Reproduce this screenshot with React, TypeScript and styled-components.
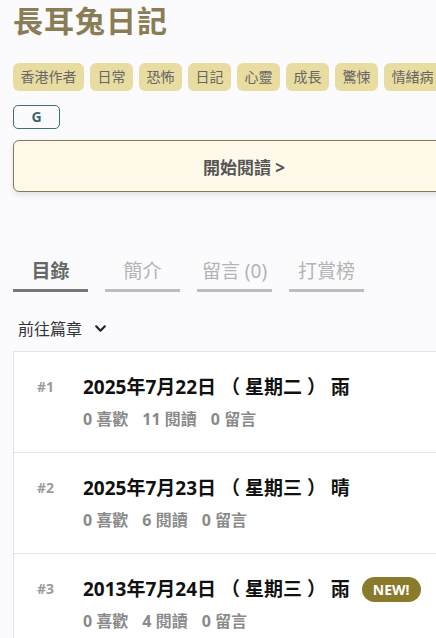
import styled, { createGlobalStyle } from "styled-components";

const GlobalStyle = createGlobalStyle`
  html, body {
    margin: 0;
    padding: 0;
    background: #fbfbfd;
    overflow: hidden;
  }
  body {
    font-family: "Noto Sans", "Noto Sans CJK TC", sans-serif;
  }
`;

const Page = styled.div`
  width: 462px;
  padding: 0 0 0 13px;
`;

const Title = styled.h1`
  margin: 0;
  padding-top: 1px;
  font-size: 30px;
  line-height: 40px;
  font-weight: 700;
  color: #8a7d55;
  letter-spacing: 1px;
`;

const Tags = styled.div`
  display: flex;
  gap: 6px;
  margin-top: 22px;
  white-space: nowrap;
`;

const Tag = styled.span`
  flex: none;
  background: #e9dca1;
  color: #666;
  font-size: 14px;
  line-height: 28px;
  height: 28px;
  padding: 0 7.5px;
  border-radius: 6px;
`;

const GButton = styled.div`
  margin-top: 14px;
  width: 45px;
  height: 22px;
  border: 1px solid #3d6f7b;
  border-radius: 5px;
  color: #3d6470;
  font-weight: 700;
  font-size: 14px;
  line-height: 22px;
  text-align: center;
`;

const ReadButton = styled.div`
  margin-top: 11px;
  height: 50px;
  border: 1px solid #85795a;
  border-radius: 6px;
  background: #fff9ea;
  box-shadow: 0 3px 6px rgba(0, 0, 0, 0.1);
  display: flex;
  align-items: center;
  justify-content: center;
  color: #555;
  font-weight: 700;
  font-size: 17px;
`;

const TabBar = styled.div`
  display: flex;
  gap: 17px;
  margin-top: 59px;
`;

const Tab = styled.div<{ $active?: boolean }>`
  width: 75px;
  height: 38px;
  border-bottom: 3px solid ${(p) => (p.$active ? "#777" : "#bdbdbd")};
  display: flex;
  align-items: center;
  justify-content: center;
  font-size: 19px;
  font-weight: ${(p) => (p.$active ? 700 : 400)};
  color: ${(p) => (p.$active ? "#666" : "#b3b3b3")};
`;

const Jump = styled.div`
  display: flex;
  align-items: center;
  gap: 12px;
  margin: 24px 0 0 5px;
  font-size: 16px;
  color: #333;
  height: 24px;
`;

const List = styled.div`
  margin-top: 11px;
  background: #fff;
  border: 1px solid #e3e3e3;
`;

const Row = styled.div`
  display: flex;
  height: 101px;
  border-bottom: 1px solid #e3e3e3;
  padding: 20px 0 0 23px;
  box-sizing: border-box;
`;

const Num = styled.div`
  width: 46px;
  font-size: 14px;
  font-weight: 700;
  color: #9a9a9a;
  line-height: 30px;
`;

const Body = styled.div`
  display: flex;
  flex-direction: column;
`;

const ChapterTitle = styled.div`
  display: flex;
  align-items: center;
  gap: 12px;
  font-size: 19px;
  font-weight: 700;
  color: #111;
  line-height: 30px;
  white-space: pre;
`;

const NewBadge = styled.span`
  background: #897a2c;
  color: #fff;
  font-size: 14px;
  font-weight: 700;
  border-radius: 13px;
  padding: 0 11px;
  line-height: 25px;
  height: 25px;
`;

const Meta = styled.div`
  display: flex;
  gap: 14px;
  margin-top: 4px;
  font-size: 16px;
  font-weight: 700;
  color: #8a8a8a;
`;

const chapters = [
  { n: 1, title: "2025年7月22日 （ 星期二 ） 雨", likes: 0, reads: 11, comments: 0 },
  { n: 2, title: "2025年7月23日 （ 星期三 ） 晴", likes: 0, reads: 6, comments: 0 },
  { n: 3, title: "2013年7月24日 （ 星期三 ） 雨", likes: 0, reads: 4, comments: 0, isNew: true },
];

const tags = ["香港作者", "日常", "恐怖", "日記", "心靈", "成長", "驚悚", "情緒病"];

export default function App() {
  return (
    <Page>
      <GlobalStyle />
      <Title>長耳兔日記</Title>
      <Tags>
        {tags.map((t) => (
          <Tag key={t}>{t}</Tag>
        ))}
      </Tags>
      <GButton>G</GButton>
      <ReadButton>開始閱讀 &gt;</ReadButton>
      <TabBar>
        <Tab $active>目錄</Tab>
        <Tab>簡介</Tab>
        <Tab>留言 (0)</Tab>
        <Tab>打賞榜</Tab>
      </TabBar>
      <Jump>
        前往篇章
        <svg width="13" height="13" viewBox="0 0 24 24" fill="none" stroke="#222" strokeWidth="4" strokeLinecap="round" strokeLinejoin="round">
          <path d="M4 8l8 8 8-8" />
        </svg>
      </Jump>
      <List>
        {chapters.map((c) => (
          <Row key={c.n}>
            <Num>#{c.n}</Num>
            <Body>
              <ChapterTitle>
                <span>{c.title}</span>
                {c.isNew ? <NewBadge>NEW!</NewBadge> : null}
              </ChapterTitle>
              <Meta>
                <span>{c.likes} 喜歡</span>
                <span>{c.reads} 閱讀</span>
                <span>{c.comments} 留言</span>
              </Meta>
            </Body>
          </Row>
        ))}
      </List>
    </Page>
  );
}
